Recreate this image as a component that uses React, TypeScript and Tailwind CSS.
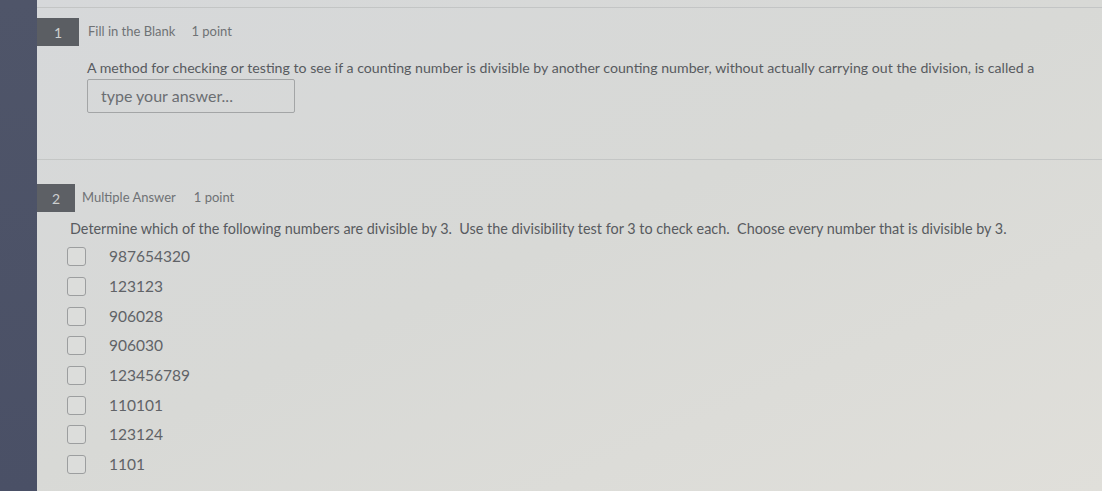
import React from "react";

const options = ["987654320", "123123", "906028", "906030", "123456789", "110101", "123124", "1101"];

function Checkbox() {
  return <div className="h-[19px] w-[19px] shrink-0 rounded-[3px] border-[1.5px] border-[#9c9e9f] bg-[#dcdddb]" />;
}

export default function App() {
  return (
    <div
      className="flex h-[491px] w-[1102px] overflow-hidden bg-gradient-to-br from-[#d6d8da] via-[#d8d9d6] to-[#e0dfda]"
      style={{ fontFamily: "Lato, 'Open Sans', sans-serif" }}
    >
      <div className="w-[37px] shrink-0 bg-gradient-to-b from-[#4f5569] to-[#4a5066]" />
      <div className="flex flex-1 flex-col">
        <div className="h-[7px]" />
        <div className="h-px bg-[#c3c5c5]" />
        <section className="pt-[10px]">
          <div className="flex h-[28px] items-center">
            <div className="flex h-full w-[42px] items-center justify-center bg-[#5b5e63] text-[14px] text-[#cdcfcf]">1</div>
            <span className="ml-[9px] text-[13px] text-[#6f7275]">Fill in the Blank</span>
            <span className="ml-[16px] text-[13px] text-[#6f7275]">1 point</span>
          </div>
          <p className="mt-[12px] pl-[50px] text-[14.15px] leading-[20px] text-[#585b60]">
            A method for checking or testing to see if a counting number is divisible by another counting number, without actually carrying out the division, is called a
          </p>
          <div className="ml-[50px] mt-[1px] flex h-[34px] w-[208px] items-center rounded-[2px] border border-[#a3a5a6] pl-[13px] text-[16px] text-[#6b6e72]">
            type your answer...
          </div>
        </section>
        <div className="mt-[46px] h-px bg-[#c4c6c5]" />
        <section className="pt-[24px]">
          <div className="flex h-[28px] items-center">
            <div className="flex h-full w-[38px] items-center justify-center bg-[#5d6065] text-[14px] text-[#cdcfcf]">2</div>
            <span className="ml-[7px] text-[13px] text-[#6f7275]">Multiple Answer</span>
            <span className="ml-[18px] text-[13px] text-[#6f7275]">1 point</span>
          </div>
          <p className="mt-[7px] pl-[33px] text-[14.4px] leading-[20px] text-[#585b60]">
            Determine which of the following numbers are divisible by 3.&nbsp; Use the divisibility test for 3 to check each.&nbsp; Choose every number that is divisible by 3.
          </p>
          <div className="mt-[3px] flex flex-col pl-[30px]">
            {options.map((o) => (
              <div key={o} className="flex h-[29.7px] items-center">
                <Checkbox />
                <span className="ml-[23px] text-[15.5px] text-[#606367]">{o}</span>
              </div>
            ))}
          </div>
        </section>
      </div>
    </div>
  );
}
